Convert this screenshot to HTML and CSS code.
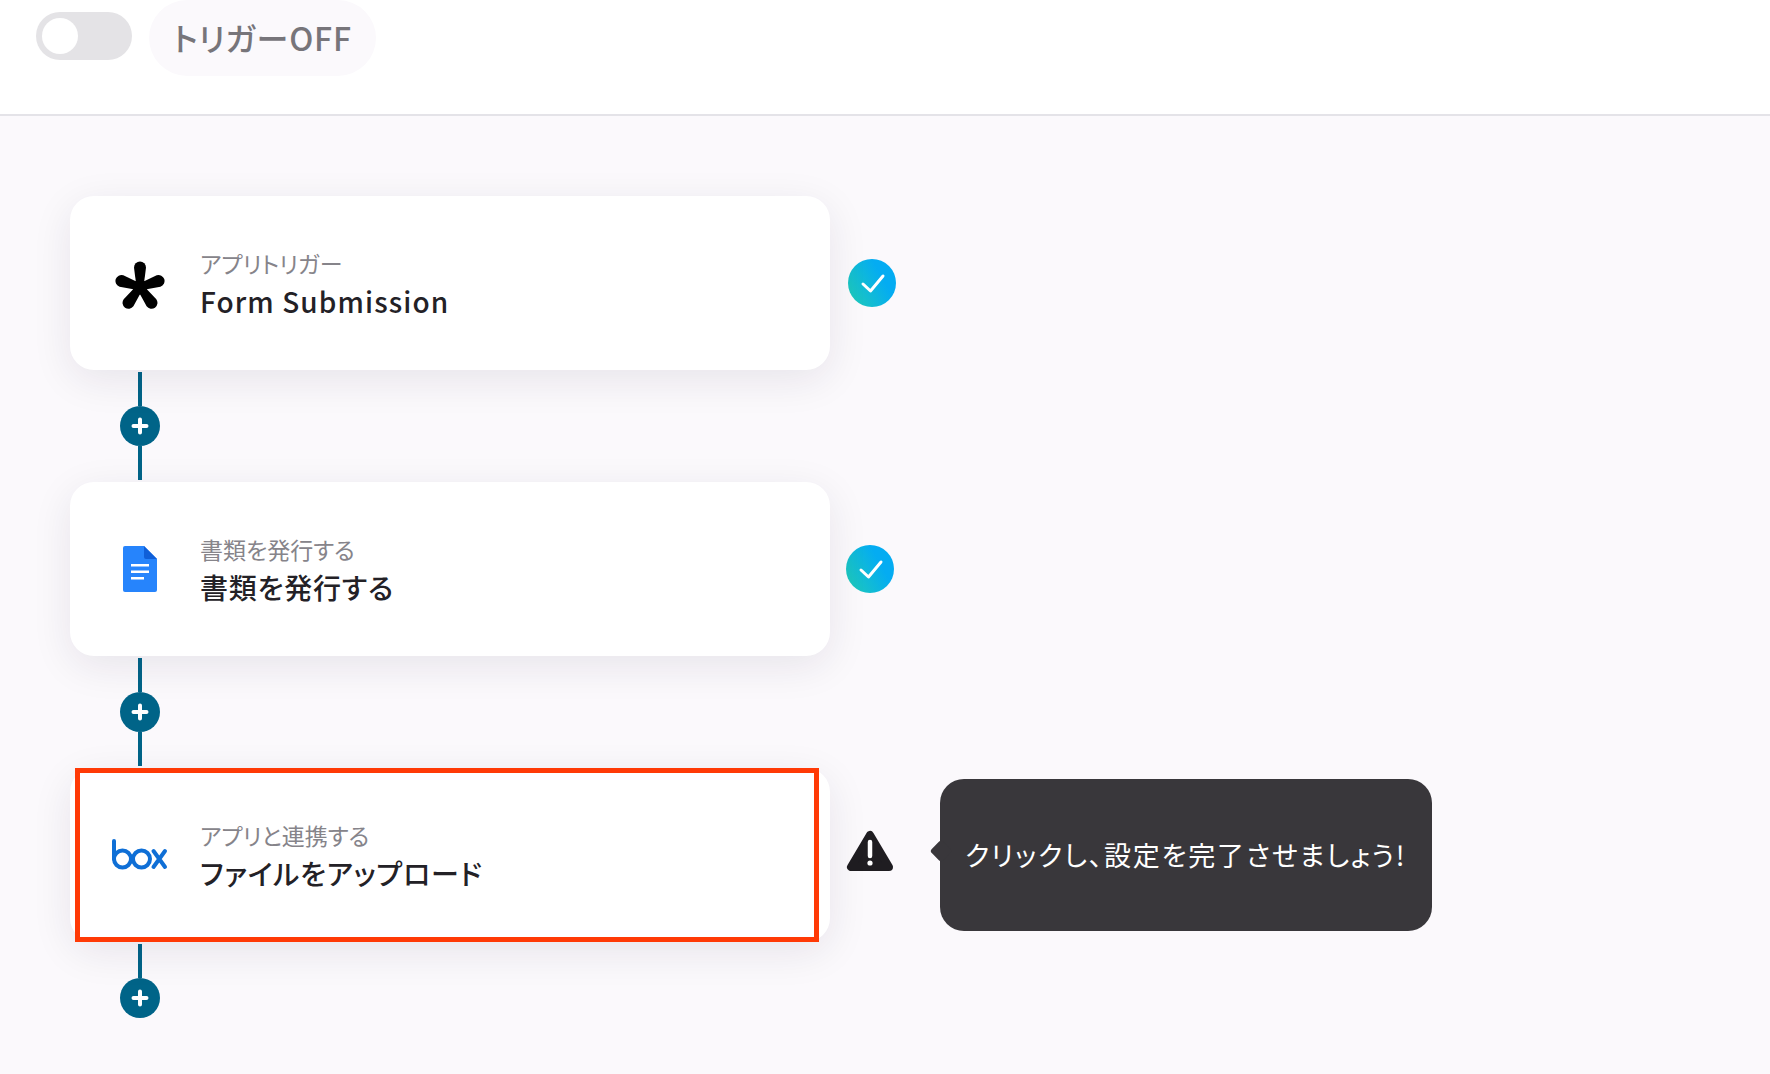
FILE: index.html
```html
<!DOCTYPE html>
<html lang="ja">
<head>
    <meta charset="UTF-8">
    <title>トリガー</title>
    <link rel="stylesheet" href="styles.css">
</head>
<body>
    <header class="topbar">
        <div class="toggle"><span class="knob"></span></div>
        <div class="trigger-pill">トリガーOFF</div>
    </header>

    <main class="flow">
        <div class="step">
            <div class="card">
                <div class="app-icon">
                    <svg class="icon-star" width="50" height="50" viewBox="0 0 50 50">
                        <g fill="#000">
                            <circle cx="25" cy="26" r="7.500"/>
                            <path d="M21.500 26L19 6.500a6 6 0 1 1 12 0L28.500 26z"/>
                            <path d="M21.500 26L19 6.500a6 6 0 1 1 12 0L28.500 26z" transform="rotate(72 25 26)"/>
                            <path d="M21.500 26L19 6.500a6 6 0 1 1 12 0L28.500 26z" transform="rotate(144 25 26)"/>
                            <path d="M21.500 26L19 6.500a6 6 0 1 1 12 0L28.500 26z" transform="rotate(216 25 26)"/>
                            <path d="M21.500 26L19 6.500a6 6 0 1 1 12 0L28.500 26z" transform="rotate(288 25 26)"/>
                        </g>
                    </svg>
                </div>
                <div class="card-text">
                    <div class="card-label">アプリトリガー</div>
                    <div class="card-title title-latin">Form Submission</div>
                </div>
            </div>
            <svg class="status check-first" width="48" height="48" viewBox="0 0 48 48">
                <defs>
                    <linearGradient id="checkGrad" x1="0" y1="0.85" x2="1" y2="0.3">
                        <stop offset="0" stop-color="#1fcab8"/>
                        <stop offset="0.75" stop-color="#04acf2"/>
                    </linearGradient>
                </defs>
                <circle cx="24" cy="24" r="24" fill="url(#checkGrad)"/>
                <path d="M15 25l7.500 7L35 17" fill="none" stroke="#fff" stroke-width="3" stroke-linecap="round" stroke-linejoin="round"/>
            </svg>
        </div>

        <div class="connector">
            <span class="line"></span>
            <span class="add"><svg width="18" height="18" viewBox="0 0 18 18"><path d="M9 2.500v13M2.500 9h13" stroke="#fff" stroke-width="4" stroke-linecap="round"/></svg></span>
            <span class="line"></span>
        </div>

        <div class="step">
            <div class="card">
                <div class="app-icon">
                    <svg width="34" height="46" viewBox="0 0 34 46">
                        <path d="M2 0h19l13 13v31a2 2 0 0 1-2 2H2a2 2 0 0 1-2-2V2a2 2 0 0 1 2-2z" fill="#2684fc"/>
                        <path d="M21 0l13 13H23a2 2 0 0 1-2-2z" fill="#0f5fd8"/>
                        <path d="M8 18h18v2.500H8zM8 24.500h18V27H8zM8 31h13v2.500H8z" fill="#fff"/>
                    </svg>
                </div>
                <div class="card-text">
                    <div class="card-label">書類を発行する</div>
                    <div class="card-title">書類を発行する</div>
                </div>
            </div>
            <svg class="status" width="48" height="48" viewBox="0 0 48 48">
                <circle cx="24" cy="24" r="24" fill="url(#checkGrad)"/>
                <path d="M15 25l7.500 7L35 17" fill="none" stroke="#fff" stroke-width="3" stroke-linecap="round" stroke-linejoin="round"/>
            </svg>
        </div>

        <div class="connector">
            <span class="line"></span>
            <span class="add"><svg width="18" height="18" viewBox="0 0 18 18"><path d="M9 2.500v13M2.500 9h13" stroke="#fff" stroke-width="4" stroke-linecap="round"/></svg></span>
            <span class="line"></span>
        </div>

        <div class="step">
            <div class="card">
                <div class="highlight"></div>
                <div class="app-icon">
                    <svg width="56" height="32" viewBox="0 0 56 32">
                        <g fill="none" stroke="#0f6fd6" stroke-width="4" stroke-linecap="round">
                            <path d="M2 2v18"/>
                            <circle cx="10.500" cy="20" r="8.500"/>
                            <circle cx="29.500" cy="20" r="8.500"/>
                            <path d="M41.500 12l11.500 16M53 12L41.500 28"/>
                        </g>
                    </svg>
                </div>
                <div class="card-text">
                    <div class="card-label">アプリと連携する</div>
                    <div class="card-title">ファイルをアップロード</div>
                </div>
            </div>
            <svg class="warn" width="48" height="42" viewBox="0 0 48 42">
                <path d="M24 5L5 37h38z" fill="#1f1d21" stroke="#1f1d21" stroke-width="8" stroke-linejoin="round"/>
                <path d="M24 12v14" stroke="#fff" stroke-width="4.500" stroke-linecap="round"/>
                <circle cx="24" cy="33" r="2.600" fill="#fff"/>
            </svg>
            <div class="tooltip">クリックし、設定を完了させましょう!</div>
        </div>

        <div class="connector">
            <span class="line"></span>
            <span class="add"><svg width="18" height="18" viewBox="0 0 18 18"><path d="M9 2.500v13M2.500 9h13" stroke="#fff" stroke-width="4" stroke-linecap="round"/></svg></span>
        </div>
    </main>
</body>
</html>
```

FILE: styles.css
```css
html, body {
    height: 100%;
}
body {
    margin: 0;
    height: 1074px;
    overflow: hidden;
    background: #fbf9fc;
    font-family: "Noto Sans CJK JP", "Noto Sans", sans-serif;
    color: #232126;
}
.topbar {
    display: flex;
    align-items: flex-start;
    height: 114px;
    padding-left: 36px;
    background: #fff;
    border-bottom: 2px solid #e4e3e8;
}
.toggle {
    width: 96px;
    height: 48px;
    margin-top: 12px;
    padding: 6px;
    box-sizing: border-box;
    border-radius: 24px;
    background: #e4e3e6;
}
.knob {
    display: block;
    width: 36px;
    height: 36px;
    border-radius: 50%;
    background: #fff;
}
.trigger-pill {
    height: 76px;
    margin-left: 17px;
    padding: 0 24px;
    border-radius: 38px;
    background: #fbf9fc;
    color: #77757a;
    font-size: 32px;
    font-weight: 500;
    line-height: 74px;
    letter-spacing: 0.8px;
    font-feature-settings: "palt";
}
.flow {
    padding: 80px 0 0 70px;
}
.step {
    display: flex;
    align-items: center;
}
.card {
    position: relative;
    display: flex;
    align-items: center;
    width: 760px;
    height: 174px;
    border-radius: 24px;
    background: #fff;
    box-shadow: 0 10px 40px rgba(30, 20, 50, 0.09);
}
.highlight {
    position: absolute;
    left: 5px;
    top: 0;
    width: 744px;
    height: 174px;
    box-sizing: border-box;
    border: 5px solid #ff3a06;
}
.app-icon {
    display: flex;
    justify-content: center;
    align-items: center;
    width: 60px;
    margin-left: 40px;
}
.icon-star {
    margin-top: 5px;
}
.card-text {
    margin-left: 30px;
    padding-top: 2px;
}
.card-label {
    color: #86848a;
    font-size: 23px;
    line-height: 30px;
    font-feature-settings: "palt";
}
.card-title {
    margin-top: 3px;
    font-size: 28px;
    font-weight: 500;
    line-height: 40px;
    letter-spacing: 0.8px;
    font-feature-settings: "palt";
}
.title-latin {
    letter-spacing: 1.100px;
}
.status {
    margin-left: 16px;
}
.check-first {
    margin-left: 18px;
}
.warn {
    margin: 0 0 8px 16px;
}
.tooltip {
    position: relative;
    display: flex;
    align-items: center;
    box-sizing: border-box;
    width: 492px;
    height: 152px;
    margin-left: 46px;
    padding: 0 0 2px 25px;
    border-radius: 24px;
    background: #39373b;
    color: #fff;
    font-size: 27px;
    letter-spacing: 1.800px;
    white-space: nowrap;
    font-feature-settings: "palt";
}
.tooltip::before {
    content: "";
    position: absolute;
    left: -7px;
    top: 64px;
    width: 16px;
    height: 16px;
    border-radius: 3px;
    background: #39373b;
    transform: rotate(45deg);
}
.connector {
    display: flex;
    flex-direction: column;
    align-items: center;
    width: 40px;
    margin: 2px 0 2px 50px;
}
.line {
    width: 4px;
    height: 34px;
    background: #006488;
}
.add {
    display: flex;
    justify-content: center;
    align-items: center;
    width: 40px;
    height: 40px;
    border-radius: 50%;
    background: #006488;
}
```
